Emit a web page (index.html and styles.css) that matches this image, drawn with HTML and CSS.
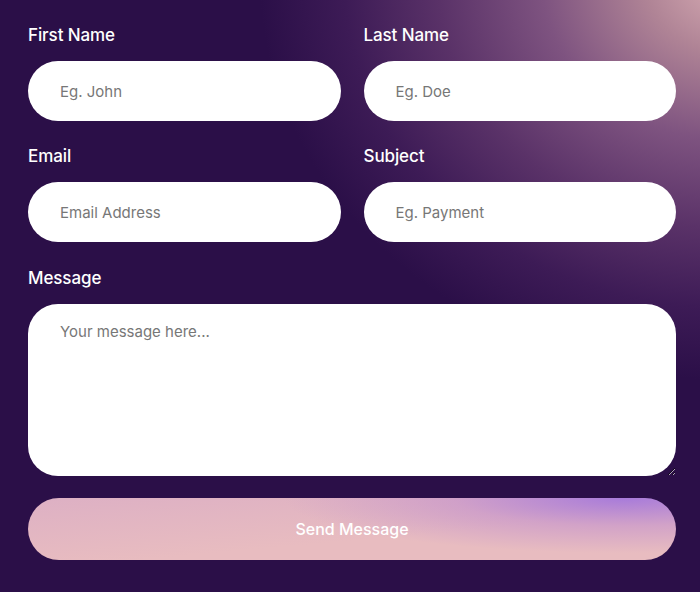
FILE: index.html
```html
<!DOCTYPE html>
<html lang="en">
  <head>
    <meta charset="UTF-8" />
    <meta name="viewport" content="width=device-width, initial-scale=1.0" />
    <title>Contact</title>
    <link rel="stylesheet" href="styles.css">
  </head>
  <body>
    <form class="contact-form">
      <div class="row">
        <div class="field">
          <label for="first_name">First Name</label>
          <input type="text" id="first_name" placeholder="Eg. John" />
        </div>
        <div class="field">
          <label for="last_name">Last Name</label>
          <input type="text" id="last_name" placeholder="Eg. Doe" />
        </div>
      </div>
      <div class="row">
        <div class="field">
          <label for="email">Email</label>
          <input type="email" id="email" placeholder="Email Address" />
        </div>
        <div class="field">
          <label for="subject">Subject</label>
          <input type="text" id="subject" placeholder="Eg. Payment" />
        </div>
      </div>
      <div class="field message-field">
        <label for="message">Message</label>
        <textarea id="message" placeholder="Your message here..."></textarea>
      </div>
      <button type="submit" class="send-btn">Send Message</button>
    </form>
  </body>
</html>
```

FILE: styles.css
```css
html,
body {
  height: 100%;
}
body {
  margin: 0;
  font-family: "Inter", "Noto Sans", Arial, sans-serif;
  color: white;
  background-color: #2b0f48;
  background-image: radial-gradient(
    ellipse 470px 400px at 730px -20px,
    #d9aeb5 0,
    #b08496 18%,
    #7e5380 40%,
    #5a3268 62%,
    #3d1b56 82%,
    rgba(43, 15, 72, 0) 100%
  );
  background-repeat: no-repeat;
}
.contact-form {
  width: 648px;
  margin-left: 28px;
  padding-top: 24px;
}
.row {
  display: grid;
  grid-template-columns: 1fr 1fr;
  gap: 23px;
}
.field {
  margin-bottom: 24px;
}
.message-field {
  margin-top: 1px;
  margin-bottom: 22px;
}
.field label {
  display: block;
  font-size: 17px;
  font-weight: 500;
  line-height: 22px;
  margin-bottom: 15px;
  letter-spacing: -0.1px;
}
input,
textarea {
  display: block;
  width: 100%;
  box-sizing: border-box;
  border: none;
  outline: none;
  background: white;
  font-family: inherit;
  font-size: 15px;
  color: #333;
}
input {
  height: 60px;
  padding: 0 32px;
  border-radius: 30px;
}
textarea {
  height: 172px;
  padding: 18px 32px;
  border-radius: 30px;
  resize: vertical;
}
input::placeholder,
textarea::placeholder {
  color: #777;
}
.send-btn {
  display: block;
  width: 100%;
  height: 62px;
  border: none;
  border-radius: 31px;
  font-family: inherit;
  font-size: 16px;
  font-weight: 500;
  color: white;
  cursor: pointer;
  background-color: #e8bcc0;
  background-image: radial-gradient(
      ellipse 340px 55px at 92% 0%,
      #a87bda 0,
      rgba(195, 145, 205, 0.6) 50%,
      rgba(232, 188, 192, 0) 100%
    ),
    linear-gradient(175deg, #ddb0c4 0%, #e8bcc0 60%);
}
```
